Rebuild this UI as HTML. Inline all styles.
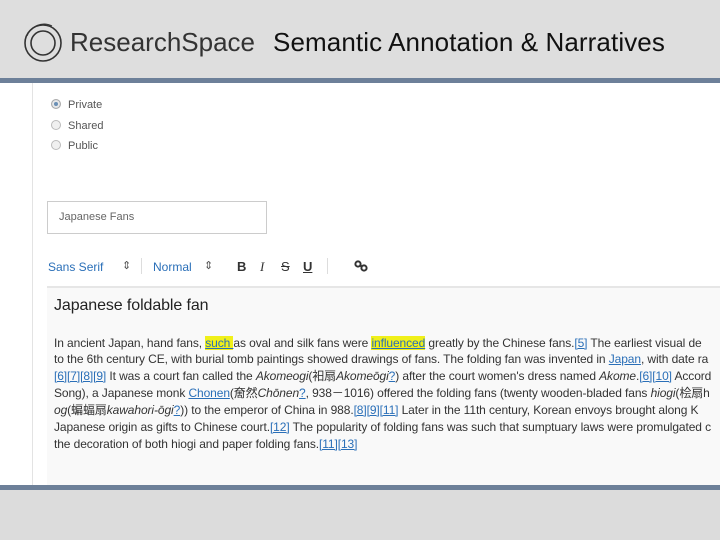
<!DOCTYPE html>
<html><head><meta charset="utf-8"><style>
*{margin:0;padding:0;box-sizing:border-box}
body{width:720px;height:540px;overflow:hidden;background:#dcdcdc;position:relative;font-family:"Liberation Sans","Noto Sans CJK JP",sans-serif}
.hdr{position:absolute;left:0;top:0;width:720px;height:78px;background:#dedede}
.bar{position:absolute;left:0;width:720px;height:5px;background:#6d8099}
.main{position:absolute;left:0;top:83px;width:720px;height:402px;background:#fff;overflow:hidden}
.vl{position:absolute;left:32px;top:0;width:1px;height:402px;background:#e3e3e3}
.a{position:absolute;white-space:nowrap}
.radio{position:absolute;left:51px;width:10px;height:10px;border-radius:50%;border:1px solid #bbb;background:#f0f0f0}
.rl{position:absolute;left:68px;font-size:11px;color:#555}
.ed{position:absolute;left:47px;top:203px;width:680px;height:199px;background:#f9f9f9;border-top:2px solid #e6e6e6}
.t{position:absolute;left:54px;font-size:12px;line-height:14px;height:14px;color:#333;white-space:nowrap;letter-spacing:-0.1px}
.l{color:#2a6fb8;text-decoration:underline}
.h{background:#f0f01a;color:#2a6fb8;text-decoration:underline}
</style></head><body>
<div class="hdr">
<svg class="a" style="left:22px;top:22px" width="42" height="42" viewBox="0 0 42 42"><circle cx="21" cy="21" r="18" fill="none" stroke="#333" stroke-width="1.6"/><circle cx="21" cy="21" r="12" fill="none" stroke="#333" stroke-width="1.6"/><path d="M5 14 A18 18 0 0 1 30 4" fill="none" stroke="#333" stroke-width="1"/></svg>
<div class="a" style="left:70px;top:27px;font-size:26px;color:#333">ResearchSpace</div>
<div class="a" style="left:273px;top:27px;font-size:26px;color:#111;letter-spacing:0.1px">Semantic Annotation &amp; Narratives</div>
</div>
<div class="bar" style="top:78px"></div>
<div class="main">
<div class="vl"></div>
<div class="radio" style="top:16px;background:#6a8fb5;border-color:#aaa;box-shadow:inset 0 0 0 2px #e8e8e8"></div><div class="rl" style="top:16px">Private</div>
<div class="radio" style="top:37px"></div><div class="rl" style="top:37px">Shared</div>
<div class="radio" style="top:57px"></div><div class="rl" style="top:57px">Public</div>
<div class="a" style="left:47px;top:118px;width:220px;height:33px;border:1px solid #ccc;background:#fff"></div>
<div class="a" style="left:59px;top:128px;font-size:11px;color:#666">Japanese Fans</div>
<div class="a" style="left:48px;top:177px;font-size:12px;color:#2a6fb8">Sans Serif</div>
<div class="a" style="left:122px;top:176px;font-size:11px;color:#555">⇕</div>
<div class="a" style="left:141px;top:175px;width:1px;height:16px;background:#ddd"></div>
<div class="a" style="left:153px;top:177px;font-size:12px;color:#2a6fb8">Normal</div>
<div class="a" style="left:204px;top:176px;font-size:11px;color:#555">⇕</div>
<div class="a" style="left:237px;top:176px;font-size:13px;font-weight:bold;color:#333">B</div>
<div class="a" style="left:260px;top:176px;font-size:13px;font-style:italic;font-family:'Liberation Serif',serif;color:#333">I</div>
<div class="a" style="left:281px;top:176px;font-size:13px;text-decoration:line-through;color:#333">S</div>
<div class="a" style="left:303px;top:176px;font-size:13px;font-weight:bold;text-decoration:underline;color:#333">U</div>
<div class="a" style="left:327px;top:175px;width:1px;height:16px;background:#ddd"></div>
<svg class="a" style="left:354px;top:177px" width="14" height="12" viewBox="0 0 14 12"><circle cx="4" cy="4" r="2.6" fill="none" stroke="#333" stroke-width="2"/><circle cx="10" cy="8" r="2.6" fill="none" stroke="#333" stroke-width="2"/><path d="M5.5 5.5 L8.5 6.5" stroke="#333" stroke-width="2"/></svg>
<div class="ed"></div>
<div class="t" style="top:214px;font-size:16px;line-height:18px;height:18px;color:#222">Japanese foldable fan</div>
<div class="t" style="top:253px">In ancient Japan, hand fans, <span class="h">such </span> as oval and silk fans were <span class="h">influenced</span>  greatly by the Chinese fans.<span class="l">[5]</span>  The earliest visual de</div>
<div class="t" style="top:269px">to the 6th  century CE, with burial tomb paintings showed drawings of fans. The  folding fan was invented in <span class="l">Japan</span>, with date ra</div>
<div class="t" style="top:286px"><span class="l">[6][7][8][9]</span> It was a court fan called the <i>Akomeogi</i>(衵扇<i>Akomeōgi</i><span class="l">?</span>) after the court women's dress named <i>Akome</i>.<span class="l">[6][10]</span> Accord</div>
<div class="t" style="top:303px">Song), a Japanese monk <span class="l">Chonen</span>(奝然<i>Chōnen</i><span class="l">?</span>, 938－1016) offered the folding fans (twenty wooden-bladed fans <i>hiogi</i>(桧扇h</div>
<div class="t" style="top:320px"><i>og</i>(蝙蝠扇<i>kawahori-ōgi</i><span class="l">?</span>)) to the emperor of China in 988.<span class="l">[8][9][11]</span>  Later in the 11th century, Korean envoys brought along K</div>
<div class="t" style="top:337px">Japanese origin as gifts to Chinese court.<span class="l">[12]</span> The popularity of folding fans was such that sumptuary laws were promulgated c</div>
<div class="t" style="top:354px">the decoration of both hiogi and paper folding fans.<span class="l">[11][13]</span></div>
</div>
<div class="bar" style="top:485px"></div>
</body></html>
